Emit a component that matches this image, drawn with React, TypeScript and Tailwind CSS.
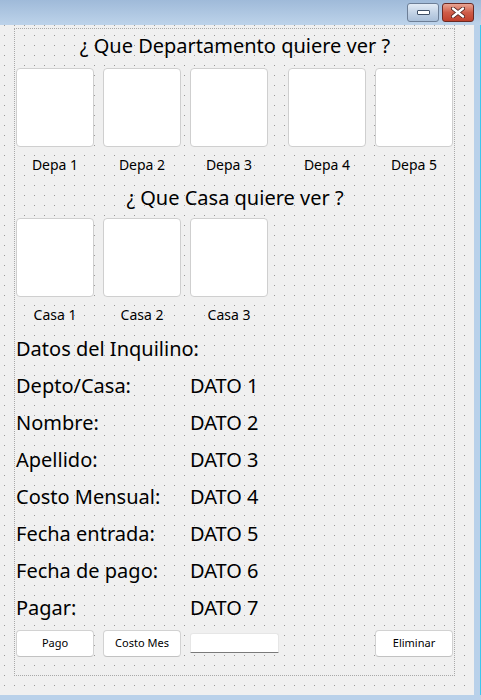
import React from "react";

// Ventana de Qt Designer: selección de departamento / casa y datos del inquilino.
const depas = [
  { label: "Depa 1", extra: "" },
  { label: "Depa 2", extra: "" },
  { label: "Depa 3", extra: "" },
  { label: "Depa 4", extra: "ml-[11px]" },
  { label: "Depa 5", extra: "" },
];

const casas = ["Casa 1", "Casa 2", "Casa 3"];

const datos = [
  ["Depto/Casa:", "DATO 1"],
  ["Nombre:", "DATO 2"],
  ["Apellido:", "DATO 3"],
  ["Costo Mensual:", "DATO 4"],
  ["Fecha entrada:", "DATO 5"],
  ["Fecha de pago:", "DATO 6"],
  ["Pagar:", "DATO 7"],
];

const font = "font-['Noto_Sans','Open_Sans',sans-serif]";

function Tile({ label, extra = "" }: { label: string; extra?: string }) {
  return (
    <div className={`flex w-[78px] flex-col items-center ${extra}`}>
      <div className="h-[79px] w-[78px] rounded-[4px] border border-solid border-[#cfcfcf] bg-white" />
      <span className="mt-[8px] h-[20px] text-[14px] leading-[20px] text-black">{label}</span>
    </div>
  );
}

function QButton({ children, extra = "" }: { children: React.ReactNode; extra?: string }) {
  return (
    <button
      className={`flex h-[27px] w-[78px] items-center justify-center rounded-[4px] border border-solid border-[#d2d2d2] border-b-[#c2c2c2] bg-white text-[11px] text-black ${extra}`}
    >
      {children}
    </button>
  );
}

export default function App() {
  return (
    <div className={`flex h-[700px] w-[481px] flex-col bg-[#b9d1ea] ${font}`}>
      {/* barra de título */}
      <div className="flex h-[25px] items-start justify-end gap-[3px] bg-gradient-to-b from-[#9fbad9] to-[#bdd3ea] pr-[7px] pt-[3px]">
        <div className="flex h-[19px] w-[32px] items-center justify-center rounded-[3px] border border-[#6d7f97] bg-gradient-to-b from-[#e3ecf6] via-[#c3d3e6] to-[#a9bfd9]">
          <span className="h-[5px] w-[13px] rounded-[1px] border border-[#3f4f66] bg-white" />
        </div>
        <div className="flex h-[19px] w-[32px] items-center justify-center rounded-[3px] border border-[#6b2a24] bg-gradient-to-b from-[#e8a493] via-[#cf5c48] to-[#c0402c]">
          <svg width="14" height="11" viewBox="0 0 14 11">
            <path d="M2 1.5 L12 9.5 M12 1.5 L2 9.5" stroke="#4a1c18" strokeWidth="4" strokeLinecap="round" />
            <path d="M2 1.5 L12 9.5 M12 1.5 L2 9.5" stroke="#ffffff" strokeWidth="2.4" strokeLinecap="round" />
          </svg>
        </div>
      </div>

      <div className="flex flex-1">
        {/* formulario con rejilla de puntos */}
        <div className="h-[670px] w-[474px] bg-[#f0f0f0] bg-[radial-gradient(circle_at_4.5px_0.5px,#9a9a9a_0.5px,transparent_0.7px)] bg-[length:10px_10px] pt-[3px]">
          <div className="ml-[14px] flex h-[648px] w-[441px] flex-col border border-dotted border-[#a9a9a9] pl-[1px]">
            <h1 className="mt-[3px] h-[28px] text-center text-[20px] leading-[28px] text-black">
              ¿ Que Departamento quiere ver ?
            </h1>
            <div className="mt-[8px] flex gap-[9px]">
              {depas.map((d) => (
                <Tile key={d.label} label={d.label} extra={d.extra} />
              ))}
            </div>

            <h2 className="mt-[9px] h-[28px] text-center text-[20px] leading-[28px] text-black">
              ¿ Que Casa quiere ver ?
            </h2>
            <div className="mt-[6px] flex gap-[9px]">
              {casas.map((c) => (
                <Tile key={c} label={c} />
              ))}
            </div>

            <p className="mt-[10px] h-[28px] text-[20px] leading-[28px] text-black">Datos del Inquilino:</p>
            <div className="mt-[4px] flex flex-col">
              {datos.map(([k, v]) => (
                <div key={k} className="flex h-[37px] items-center text-[20px] text-black">
                  <span className="w-[174px]">{k}</span>
                  <span>{v}</span>
                </div>
              ))}
            </div>

            <div className="mt-[4px] flex items-start">
              <QButton>Pago</QButton>
              <QButton extra="ml-[9px]">Costo Mes</QButton>
              <input
                readOnly
                className="ml-[9px] mt-[3px] h-[20px] w-[89px] rounded-t-[3px] border border-solid border-[#e6e6e6] border-b-[#7a7a7a] bg-white outline-none"
              />
              <QButton extra="ml-auto mr-[1px]">Eliminar</QButton>
            </div>
          </div>
        </div>
        <div className="w-[7px] border-r border-[#3cc6ee] bg-[#b9d1ea]" />
      </div>
      <div className="h-[5px] bg-[#b9d1ea]" />
    </div>
  );
}
